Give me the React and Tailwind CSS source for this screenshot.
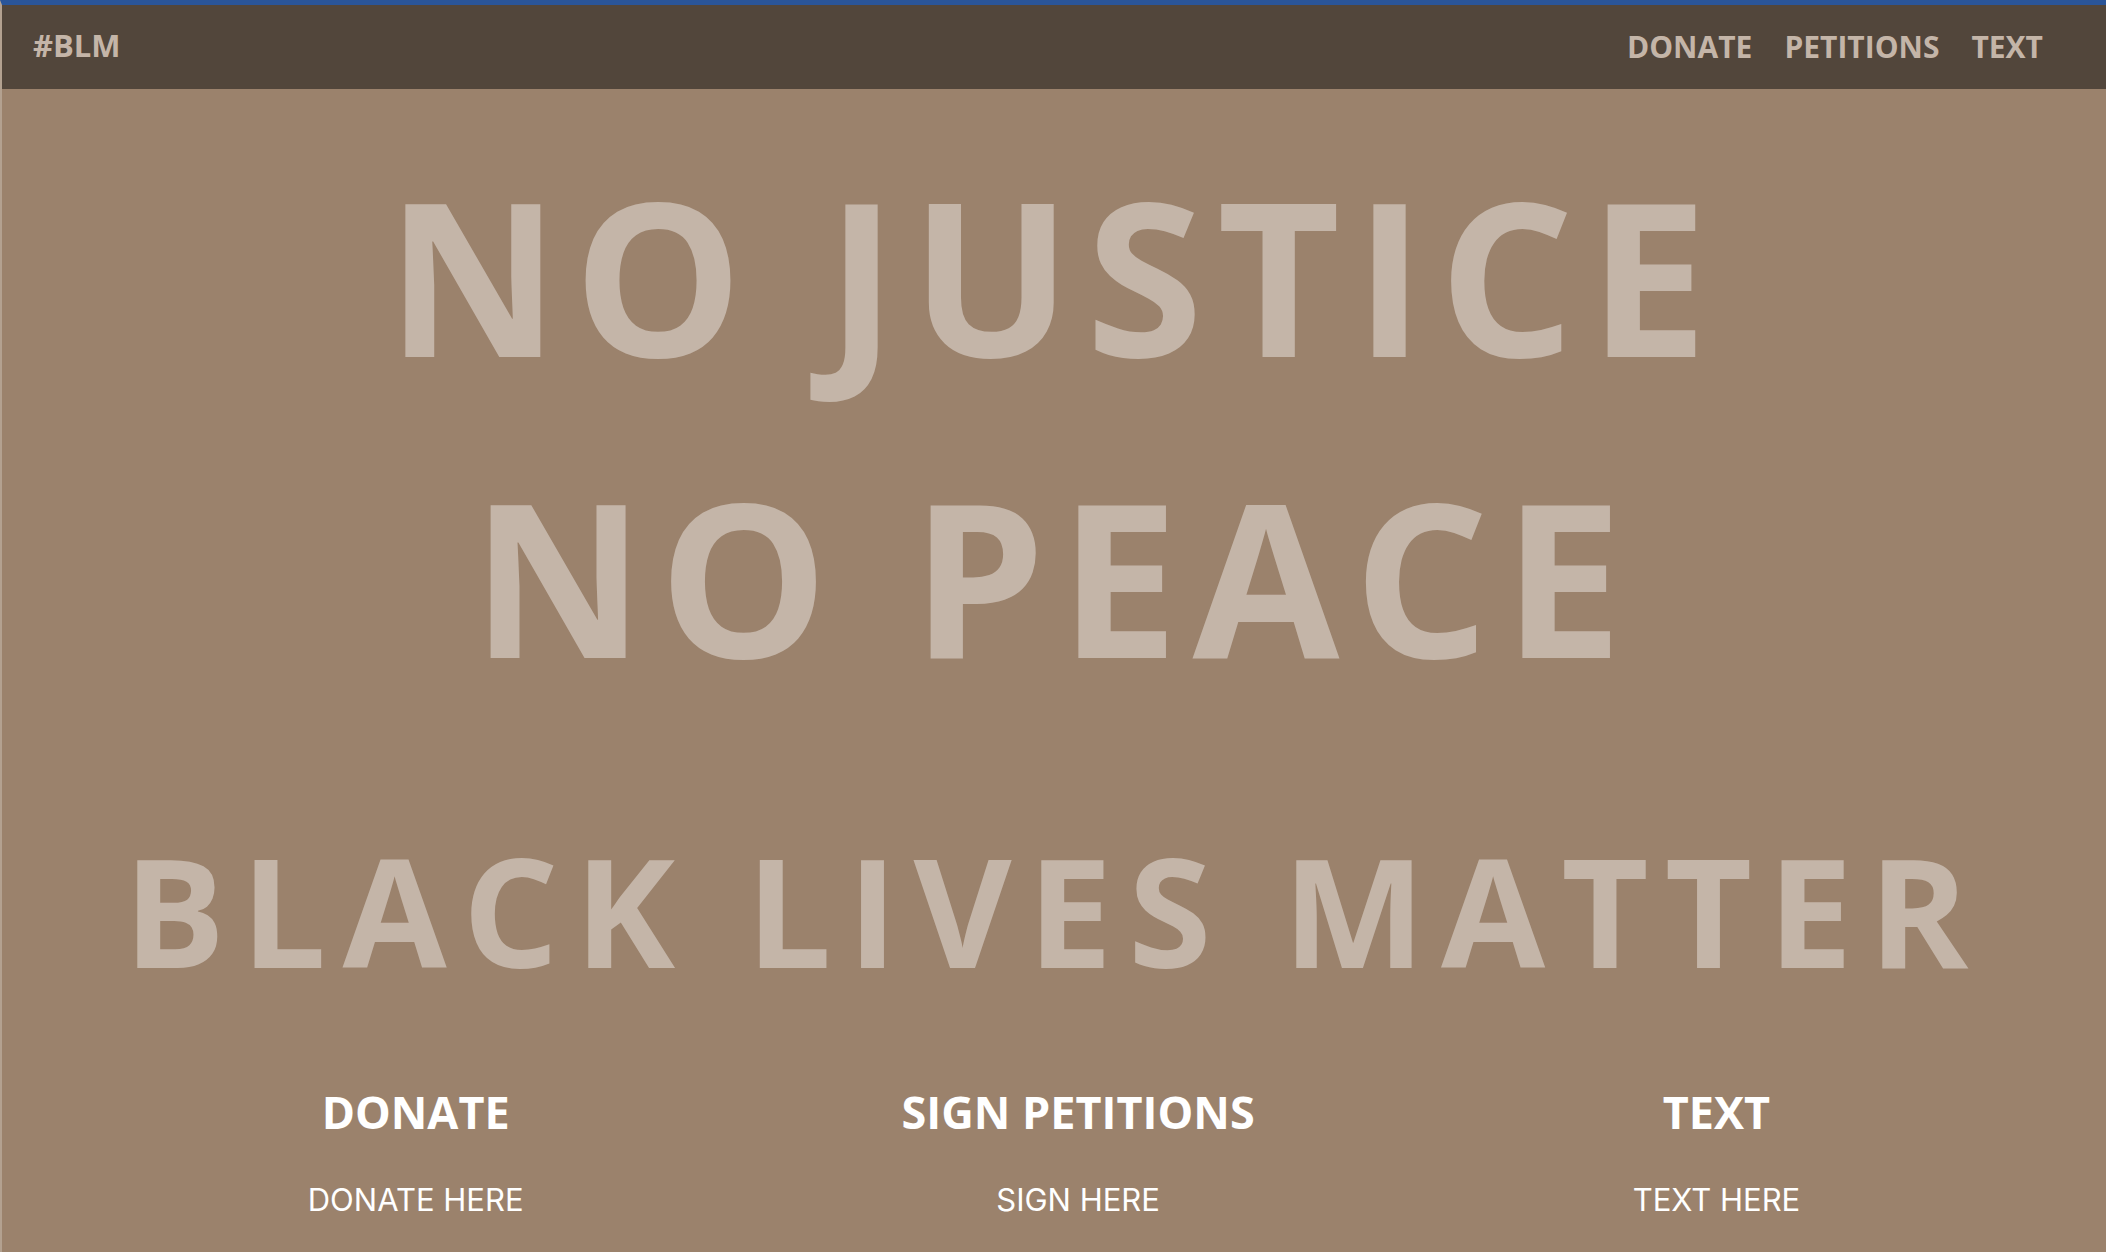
import * as React from "react";

const navLinks = ["DONATE", "PETITIONS", "TEXT"];

const actions = [
  { title: "DONATE", link: "DONATE HERE" },
  { title: "SIGN PETITIONS", link: "SIGN HERE" },
  { title: "TEXT", link: "TEXT HERE" },
];

export default function App() {
  return (
    <div
      className="w-full min-h-[1252px] bg-[#9b826c] border-t-[5px] border-[#2a5599] border-l-2 border-l-[#b3a190]"
      style={{ fontFamily: "'Open Sans', 'Liberation Sans', sans-serif" }}
    >
      {/* top bar */}
      <nav className="h-[84px] bg-[#52463b] flex items-center justify-between pl-[31px] pr-[63px] text-[#c4b5a8] font-bold">
        <span className="text-[31px] leading-none pb-[4px]">#BLM</span>
        <div className="flex gap-[32px] text-[30px] leading-none">
          {navLinks.map((item) => (
            <a key={item} className="cursor-pointer">
              {item}
            </a>
          ))}
        </div>
      </nav>

      {/* slogans */}
      <div className="flex flex-col items-center text-[#c4b5a8] font-bold pt-[35px]">
        <h1 className="text-[213px] leading-[301px] tracking-[14px]">NO JUSTICE</h1>
        <h1 className="text-[213px] leading-[301px] tracking-[14px]">NO PEACE</h1>
        <h2 className="text-[151px] leading-[200px] tracking-[16px] mt-[84px]">
          BLACK LIVES MATTER
        </h2>
      </div>

      {/* actions */}
      <div className="flex justify-center gap-[378px] mt-[72px] text-white">
        {actions.map((a) => (
          <div key={a.title} className="flex flex-col items-center">
            <h3 className="text-[45px] font-bold leading-[60px]">{a.title}</h3>
            <a
              className="text-[31px] font-normal leading-[40px] mt-[38px] cursor-pointer"
              style={{ fontFamily: "Inter, 'Liberation Sans', sans-serif" }}
            >
              {a.link}
            </a>
          </div>
        ))}
      </div>
    </div>
  );
}
